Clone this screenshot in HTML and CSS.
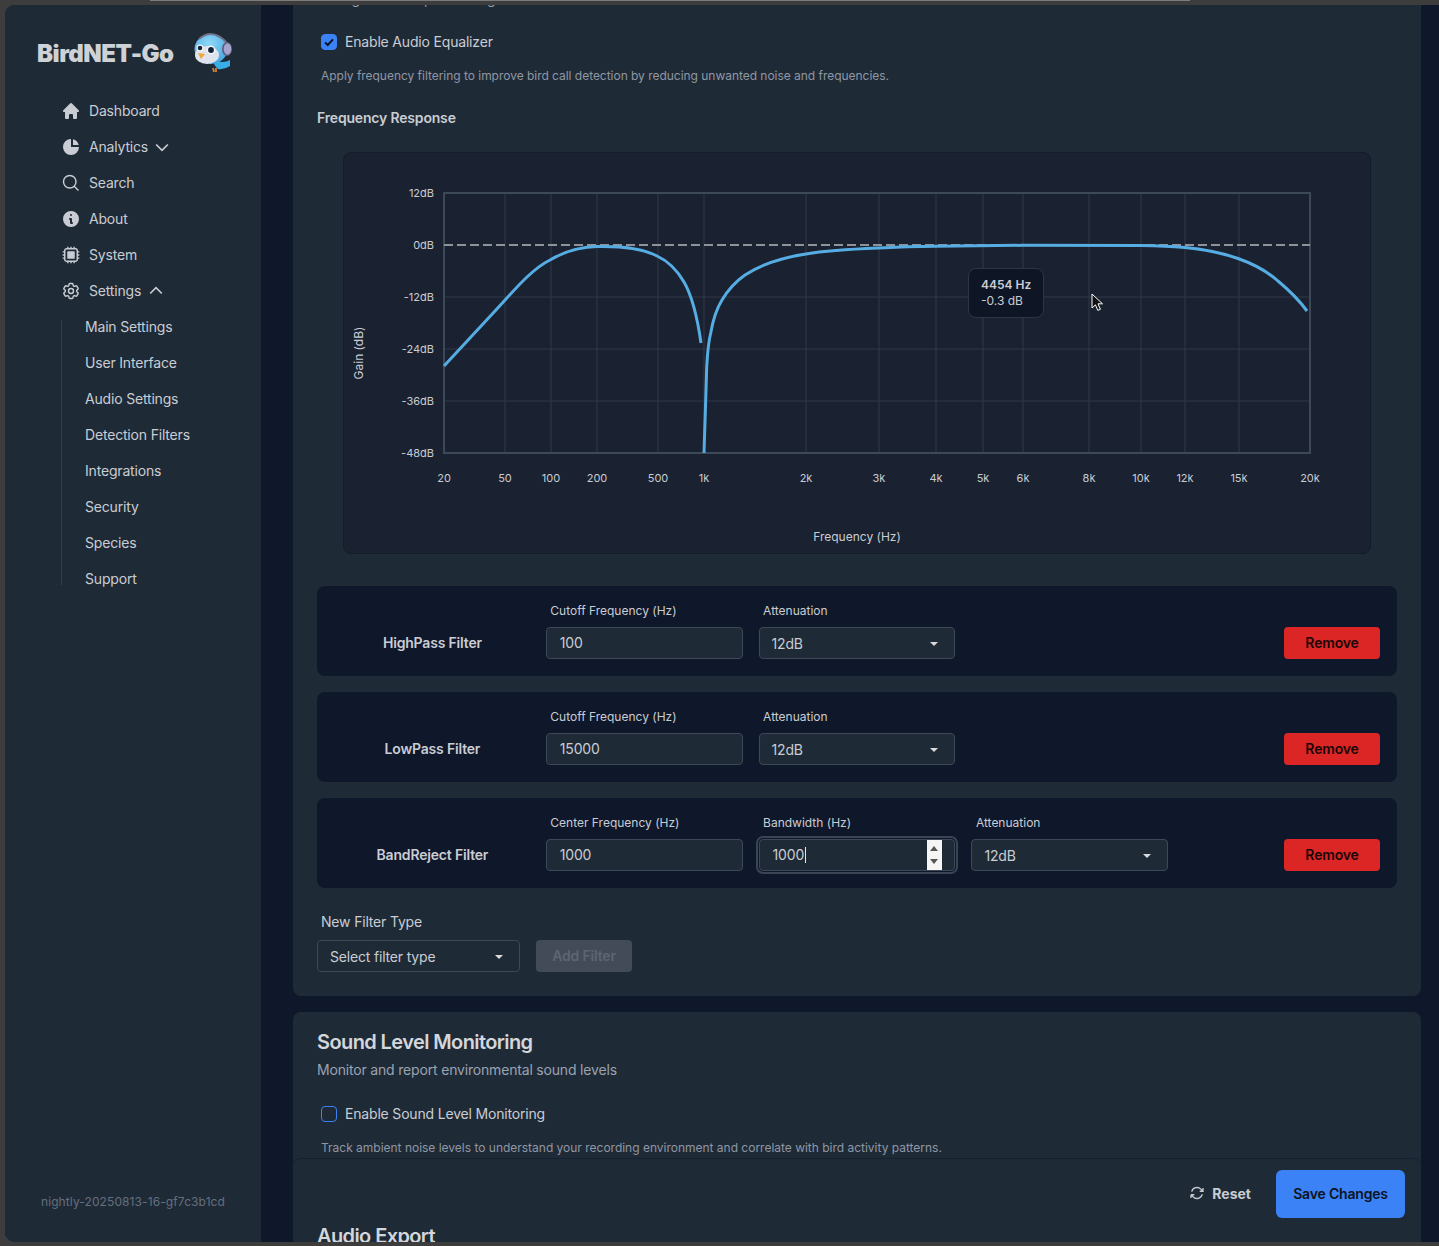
FILE: index.html
```html
<!DOCTYPE html>
<html lang="en">
<head>
    <meta charset="UTF-8">
    <meta name="viewport" content="width=device-width, initial-scale=1.0">
    <title>BirdNET-Go</title>
    <link rel="stylesheet" href="styles.css">
</head>
<body>
    <div class="window">
        <aside class="sidebar">
            <div class="brand">
                <span class="brandName">BirdNET-Go</span>
                <svg class="bird" viewBox="14 13 40 40" width="40" height="40">
                    <defs>
                        <radialGradient id="headFill" cx="0.45" cy="0.3" r="0.8">
                            <stop offset="0" stop-color="#8ed8f8"/>
                            <stop offset="1" stop-color="#3f9fdc"/>
                        </radialGradient>
                    </defs>
                    <path d="M34 40 Q44 44 51 40 L51 46 Q45 50 39 49 Q35 46 34 40 Z" fill="#39aee6"/>
                    <path d="M34 48 L35 52 M37 48 L37 52" stroke="#d9822b" stroke-width="1.8"/>
                    <ellipse cx="32" cy="29" rx="16.500" ry="15" fill="url(#headFill)"/>
                    <ellipse cx="28" cy="35" rx="12" ry="9" fill="#dfe3ee"/>
                    <circle cx="21" cy="28" r="3.6" fill="#f4f6fa"/>
                    <circle cx="32" cy="30" r="4.4" fill="#f4f6fa"/>
                    <circle cx="21" cy="28" r="2.300" fill="#14233a"/>
                    <circle cx="32" cy="30" r="2.900" fill="#14233a"/>
                    <path d="M19 33 L26 34 L22 39 Z" fill="#f2a732"/>
                    <path d="M20 19 Q34 7 49 24" fill="none" stroke="#6f7186" stroke-width="1.8"/>
                    <ellipse cx="48" cy="29" rx="5" ry="7" fill="#5d5b78"/>
                    <ellipse cx="48.500" cy="29" rx="3.800" ry="5.800" fill="#a5a3cf"/>
                </svg>
            </div>
            <nav class="nav">
                <a class="navItem">
                    <svg class="icon" viewBox="0 0 20 20" fill="currentColor"><path d="M9.293 2.293a1 1 0 011.414 0l7 7A1 1 0 0117 11h-1v6a1 1 0 01-1 1h-2a1 1 0 01-1-1v-3a1 1 0 00-1-1H9a1 1 0 00-1 1v3a1 1 0 01-1 1H5a1 1 0 01-1-1v-6H3a1 1 0 01-.707-1.707l7-7z"/></svg>
                    Dashboard
                </a>
                <a class="navItem">
                    <svg class="icon" viewBox="0 0 20 20" fill="currentColor"><path d="M2 10a8 8 0 018-8v8h8a8 8 0 11-16 0z"/><path d="M12 2.252A8.014 8.014 0 0117.748 8H12V2.252z"/></svg>
                    Analytics
                    <svg class="chev" viewBox="0 0 24 24" fill="none" stroke="currentColor" stroke-width="2"><path d="M5 9l7 7 7-7"/></svg>
                </a>
                <a class="navItem">
                    <svg class="icon" viewBox="0 0 24 24" fill="none" stroke="currentColor" stroke-width="1.700"><path d="M21 21l-5.197-5.197m0 0A7.5 7.5 0 105.196 5.196a7.5 7.5 0 0010.607 10.607z"/></svg>
                    Search
                </a>
                <a class="navItem">
                    <svg class="icon" viewBox="0 0 20 20" fill="currentColor"><path fill-rule="evenodd" d="M18 10a8 8 0 11-16 0 8 8 0 0116 0zm-7-4a1 1 0 11-2 0 1 1 0 012 0zM9 9a1 1 0 000 2v3a1 1 0 001 1h1a1 1 0 100-2v-3a1 1 0 00-1-1H9z"/></svg>
                    About
                </a>
                <a class="navItem">
                    <svg class="icon" viewBox="0 0 24 24" fill="none" stroke="currentColor" stroke-width="1.700"><path d="M8.25 2v2.500M2 8.25h2.500m15 0H22M2 12h2.500m15 0H22M2 15.750h2.500m15 0H22M8.25 19.500V22M12 2v2.500m0 15V22m3.750-20v2.500m0 15V22m-9-2.500h10.500a2.250 2.250 0 002.250-2.250V6.750a2.250 2.250 0 00-2.250-2.250H6.750A2.250 2.250 0 004.500 6.750v10.500a2.250 2.250 0 002.250 2.250z"/><rect x="7.500" y="7.500" width="9" height="9" rx="1" fill="currentColor" stroke="none"/></svg>
                    System
                </a>
                <a class="navItem">
                    <svg class="icon" viewBox="0 0 24 24" fill="none" stroke="currentColor" stroke-width="1.700"><path d="M9.594 3.94c.09-.542.56-.94 1.11-.94h2.593c.55 0 1.02.398 1.11.94l.213 1.281c.063.374.313.686.645.87.074.04.147.083.22.127.324.196.72.257 1.075.124l1.217-.456a1.125 1.125 0 011.37.49l1.296 2.247a1.125 1.125 0 01-.26 1.431l-1.003.827c-.293.24-.438.613-.431.992a6.759 6.759 0 010 .255c-.007.378.138.75.43.99l1.005.828c.424.35.534.954.26 1.43l-1.298 2.247a1.125 1.125 0 01-1.369.491l-1.217-.456c-.355-.133-.75-.072-1.076.124a6.57 6.57 0 01-.22.128c-.331.183-.581.495-.644.869l-.213 1.28c-.09.543-.56.941-1.11.941h-2.594c-.55 0-1.02-.398-1.11-.94l-.213-1.281c-.062-.374-.312-.686-.644-.87a6.52 6.52 0 01-.22-.127c-.325-.196-.72-.257-1.076-.124l-1.217.456a1.125 1.125 0 01-1.369-.49l-1.297-2.247a1.125 1.125 0 01.26-1.431l1.004-.827c.292-.24.437-.613.43-.992a6.932 6.932 0 010-.255c.007-.378-.138-.75-.43-.99l-1.004-.828a1.125 1.125 0 01-.26-1.43l1.297-2.247a1.125 1.125 0 011.37-.491l1.216.456c.356.133.751.072 1.076-.124.072-.044.146-.087.22-.128.332-.183.582-.495.644-.869l.214-1.281z"/><path d="M15 12a3 3 0 11-6 0 3 3 0 016 0z"/></svg>
                    Settings
                    <svg class="chev chevUp" viewBox="0 0 24 24" fill="none" stroke="currentColor" stroke-width="2"><path d="M5 15l7-7 7 7"/></svg>
                </a>
                <div class="subNav">
                    <a class="subItem">Main Settings</a>
                    <a class="subItem">User Interface</a>
                    <a class="subItem">Audio Settings</a>
                    <a class="subItem">Detection Filters</a>
                    <a class="subItem">Integrations</a>
                    <a class="subItem">Security</a>
                    <a class="subItem">Species</a>
                    <a class="subItem">Support</a>
                </div>
            </nav>
            <div class="version">nightly-20250813-16-gf7c3b1cd</div>
        </aside>

        <main class="main">
            <div class="content">
                <section class="card">
                    <p class="cutLine">Configure audio processing</p>
                    <label class="check">
                        <span class="box boxOn">
                            <svg viewBox="0 0 16 16" width="16" height="16" fill="none" stroke="#0b1424" stroke-width="2"><path d="M4 8.400l2.700 2.600L12 5.400"/></svg>
                        </span>
                        Enable Audio Equalizer
                    </label>
                    <p class="help">Apply frequency filtering to improve bird call detection by reducing unwanted noise and frequencies.</p>
                    <h3 class="subTitle">Frequency Response</h3>

                    <div class="chartBox">
                        <svg class="chart" viewBox="344 153 1026 400" width="1026" height="400">
                            <g class="gridLines">
                                <path d="M505 193V453M551 193V453M597 193V453M658 193V453M704 193V453M806 193V453M879 193V453M936 193V453M983 193V453M1023 193V453M1089 193V453M1141 193V453M1185 193V453M1239 193V453"/>
                                <path d="M444 297H1310M444 349H1310M444 401H1310"/>
                            </g>
                            <rect class="frame" x="444" y="193" width="866" height="260"/>
                            <path class="zeroLine" d="M444 245H1310"/>
                            <path class="curve" d="M444 366 L495 311 C512 293 530 270 550 260 C565 251 580 247 597 246.500 C620 246 642 248 657 256 C668 261 677 270 684 282 C691 294 697 315 701 343"/>
                            <path class="curve" d="M704 453 L705.700 400 L706.700 367 C707.500 352 708.500 342 710.700 333 C713 320 717 308 722 300 C728 290 735 282 745 275 C760 265 780 258 806 254 C830 250 855 249 879 248 C900 247 920 246.500 936 246.300 C970 245.700 1000 245.400 1023 245.300 C1070 245.200 1110 245.300 1141 245.600 C1160 246 1172 246.600 1185 247.600 C1205 249.500 1222 253 1238 258.500 C1255 264.500 1268 272 1278 281 C1290 291 1299 300 1307 311"/>
                            <g class="axisText yAxis">
                                <text x="434" y="197">12dB</text>
                                <text x="434" y="249">0dB</text>
                                <text x="434" y="301">-12dB</text>
                                <text x="434" y="353">-24dB</text>
                                <text x="434" y="405">-36dB</text>
                                <text x="434" y="457">-48dB</text>
                            </g>
                            <g class="axisText xAxis">
                                <text x="444" y="482">20</text>
                                <text x="505" y="482">50</text>
                                <text x="551" y="482">100</text>
                                <text x="597" y="482">200</text>
                                <text x="658" y="482">500</text>
                                <text x="704" y="482">1k</text>
                                <text x="806" y="482">2k</text>
                                <text x="879" y="482">3k</text>
                                <text x="936" y="482">4k</text>
                                <text x="983" y="482">5k</text>
                                <text x="1023" y="482">6k</text>
                                <text x="1089" y="482">8k</text>
                                <text x="1141" y="482">10k</text>
                                <text x="1185" y="482">12k</text>
                                <text x="1239" y="482">15k</text>
                                <text x="1310" y="482">20k</text>
                            </g>
                            <text class="axisTitle" x="857" y="541">Frequency (Hz)</text>
                            <text class="axisTitle" transform="translate(363 353) rotate(-90)">Gain (dB)</text>
                        </svg>
                        <div class="tooltip"><b>4454 Hz</b><br>-0.3 dB</div>
                        <svg class="pointer" viewBox="0 0 12 19" width="12" height="19"><path d="M1 1v14l3.400-3.200 2.400 5.600 2.600-1.100-2.400-5.500H11.500z" fill="#111" stroke="#fff" stroke-width="1"/></svg>
                    </div>

                    <div class="filterRow">
                        <div class="filterName">HighPass Filter</div>
                        <div class="field">
                            <label class="fieldLabel">Cutoff Frequency (Hz)</label>
                            <div class="input">100</div>
                        </div>
                        <div class="field">
                            <label class="fieldLabel">Attenuation</label>
                            <div class="input selectBox">12dB</div>
                        </div>
                        <div class="filler"></div>
                        <div class="removeCell"><button class="removeBtn">Remove</button></div>
                    </div>
                    <div class="filterRow">
                        <div class="filterName">LowPass Filter</div>
                        <div class="field">
                            <label class="fieldLabel">Cutoff Frequency (Hz)</label>
                            <div class="input">15000</div>
                        </div>
                        <div class="field">
                            <label class="fieldLabel">Attenuation</label>
                            <div class="input selectBox">12dB</div>
                        </div>
                        <div class="filler"></div>
                        <div class="removeCell"><button class="removeBtn">Remove</button></div>
                    </div>
                    <div class="filterRow">
                        <div class="filterName">BandReject Filter</div>
                        <div class="field">
                            <label class="fieldLabel">Center Frequency (Hz)</label>
                            <div class="input">1000</div>
                        </div>
                        <div class="field">
                            <label class="fieldLabel">Bandwidth (Hz)</label>
                            <div class="input inputFocus">1000<span class="caret"></span>
                                <span class="spinner"><i class="spinUp"></i><i class="spinDown"></i></span>
                            </div>
                        </div>
                        <div class="field">
                            <label class="fieldLabel">Attenuation</label>
                            <div class="input selectBox">12dB</div>
                        </div>
                        <div class="removeCell"><button class="removeBtn">Remove</button></div>
                    </div>

                    <div class="newLabel">New Filter Type</div>
                    <div class="newRow">
                        <div class="input selectBox newSelect">Select filter type</div>
                        <button class="addBtn">Add Filter</button>
                    </div>
                </section>

                <section class="card card2">
                    <h2 class="cardTitle">Sound Level Monitoring</h2>
                    <p class="cardSub">Monitor and report environmental sound levels</p>
                    <label class="check checkSound">
                        <span class="box"></span>
                        Enable Sound Level Monitoring
                    </label>
                    <p class="help helpSound">Track ambient noise levels to understand your recording environment and correlate with bird activity patterns.</p>
                </section>

                <section class="card card3">
                    <h2 class="cardTitle">Audio Export</h2>
                </section>
            </div>

            <div class="actionBar">
                <button class="resetBtn">
                    <svg viewBox="0 0 24 24" width="16" height="16" fill="none" stroke="currentColor" stroke-width="2"><path d="M16.023 9.348h4.992v-.001M2.985 19.644v-4.992m0 0h4.992m-4.993 0l3.181 3.183a8.25 8.25 0 0013.803-3.700M4.031 9.865a8.25 8.25 0 0113.803-3.700l3.181 3.182m0-4.991v4.990"/></svg>
                    Reset
                </button>
                <button class="saveBtn">Save Changes</button>
            </div>
        </main>
    </div>
</body>
</html>
```

FILE: styles.css
```css
html, body {
    margin: 0;
    height: 100%;
    overflow: hidden;
}
body {
    position: relative;
    background-color: #3d3d3d;
    font-family: Inter, "Liberation Sans", sans-serif;
    font-size: 14px;
    letter-spacing: -0.18px;
    color: #c9cdd3;
}
/* light edge of the window behind */
body::before {
    content: "";
    position: absolute;
    left: 150px;
    top: 0;
    width: 1040px;
    height: 1px;
    background-color: #7c7c7c;
}
button {
    font-family: inherit;
    letter-spacing: inherit;
    border: none;
    cursor: pointer;
}

.window {
    display: flex;
    height: 1237px;
    margin: 5px 0 0 5px;
    border-radius: 10px 0 0 10px;
    overflow: hidden;
    background-color: #0f172a;
}

/* sidebar */
.sidebar {
    position: relative;
    flex: 0 0 256px;
    background-color: #1f2a37;
}
.brand {
    display: flex;
    align-items: center;
    gap: 19px;
    height: 40px;
    padding: 28px 0 0 32px;
}
.brandName {
    font-size: 24px;
    font-weight: 900;
    letter-spacing: -0.5px;
    color: #ced1d6;
}
.bird {
    flex: none;
}
.nav {
    margin-top: 20px;
    padding-left: 56px;
}
.navItem {
    display: flex;
    align-items: center;
    height: 36px;
    line-height: 36px;
}
.icon {
    flex: none;
    width: 20px;
    height: 20px;
    margin-right: 8px;
}
.chev {
    width: 20px;
    height: 20px;
    margin-left: 4px;
}
.chevUp {
    margin-left: 5px;
}
.subNav {
    position: relative;
}
.subNav::before {
    content: "";
    position: absolute;
    left: 0;
    top: 11px;
    bottom: 12px;
    width: 1px;
    background-color: #333e4c;
}
.subItem {
    display: block;
    height: 36px;
    line-height: 36px;
    padding-left: 24px;
}
.version {
    position: absolute;
    left: 0;
    right: 0;
    bottom: 32px;
    text-align: center;
    font-size: 12px;
    letter-spacing: 0.1px;
    line-height: 16px;
    color: #666f7c;
}

/* main area */
.main {
    position: relative;
    flex: 1;
    overflow: hidden;
    padding: 0 18px 0 32px;
}
.content {
    margin-top: -40px;
}
.card {
    padding: 24px;
    margin-bottom: 16px;
    border-radius: 8px;
    background-color: #1f2a37;
}
.cutLine {
    margin: 0 0 25px 0;
    line-height: 20px;
    color: #9aa3af;
}
.check {
    display: flex;
    align-items: flex-start;
    gap: 8px;
    height: 16px;
    line-height: 15px;
    padding-left: 4px;
}
.box {
    box-sizing: border-box;
    width: 16px;
    height: 16px;
    border: 1px solid #3b82f6;
    border-radius: 4px;
}
.boxOn {
    background-color: #3b82f6;
}
.box svg {
    display: block;
    margin: -1px;
}
.help {
    margin: 18px 0 24px 0;
    padding-left: 4px;
    font-size: 12px;
    letter-spacing: -0.03px;
    line-height: 16px;
    color: #8f97a3;
}
.subTitle {
    margin: 0 0 24px 0;
    font-size: 14px;
    line-height: 20px;
    font-weight: 600;
}

/* chart */
.chartBox {
    position: relative;
    height: 400px;
    margin: 0 26px 32px 26px;
    border: 1px solid #141c2c;
    border-radius: 8px;
    background-color: #1a2130;
}
.chart {
    display: block;
}
.gridLines path {
    stroke: #303a49;
    stroke-width: 1;
    fill: none;
}
.frame {
    fill: none;
    stroke: #3d4858;
    stroke-width: 2;
}
.zeroLine {
    stroke: #8f9399;
    stroke-width: 2;
    stroke-dasharray: 9 4;
    fill: none;
}
.curve {
    fill: none;
    stroke: #56ade3;
    stroke-width: 3;
}
.axisText text {
    font-size: 11px;
    letter-spacing: 0;
    fill: #c9cdd3;
}
.yAxis text {
    text-anchor: end;
}
.xAxis text {
    text-anchor: middle;
}
.axisTitle {
    font-size: 12px;
    letter-spacing: 0;
    fill: #c9cdd3;
    text-anchor: middle;
}
.tooltip {
    position: absolute;
    left: 624px;
    top: 115px;
    box-sizing: border-box;
    width: 76px;
    height: 50px;
    padding: 8px 12px;
    border: 1px solid #2c3645;
    border-radius: 8px;
    background-color: #0e1626;
    font-size: 12px;
    letter-spacing: 0;
    line-height: 16px;
    white-space: nowrap;
}
.tooltip b {
    font-weight: 600;
}
.pointer {
    position: absolute;
    left: 747px;
    top: 140px;
}

/* filter rows */
.filterRow {
    display: grid;
    grid-template-columns: repeat(5, 1fr);
    column-gap: 16px;
    align-items: end;
    padding: 16px 16px 17px 16px;
    margin-bottom: 16px;
    border-radius: 8px;
    background-color: #0f172a;
}
.filterName {
    height: 32px;
    padding-left: 2px;
    line-height: 32px;
    text-align: center;
    font-weight: 600;
}
.fieldLabel {
    display: block;
    height: 25px;
    padding-left: 4.500px;
    font-size: 12px;
    letter-spacing: 0;
    line-height: 18px;
}
.input {
    position: relative;
    box-sizing: border-box;
    height: 32px;
    padding-left: 13px;
    line-height: 30px;
    border: 1px solid #3d4858;
    border-radius: 4px;
    background-color: #1f2a37;
}
.selectBox {
    padding-left: 12px;
    line-height: 32px;
}
.selectBox::after {
    content: "";
    position: absolute;
    right: 16px;
    top: 14px;
    border-left: 4px solid transparent;
    border-right: 4px solid transparent;
    border-top: 4px solid #d8dade;
}
.inputFocus {
    outline: 2px solid #3a4453;
    outline-offset: 1px;
}
.caret {
    display: inline-block;
    width: 1px;
    height: 16px;
    margin-left: 1px;
    vertical-align: -3px;
    background-color: #e5e7eb;
}
.spinner {
    position: absolute;
    right: 12px;
    top: 0;
    bottom: 0;
    width: 15px;
    background-color: #f5f5f5;
}
.spinUp, .spinDown {
    position: absolute;
    left: 3px;
    border-left: 4px solid transparent;
    border-right: 4px solid transparent;
}
.spinUp {
    top: 6px;
    border-bottom: 5px solid #555;
}
.spinDown {
    bottom: 6px;
    border-top: 5px solid #555;
}
.removeCell {
    text-align: right;
}
.removeBtn {
    width: 96px;
    height: 32px;
    margin-right: 1px;
    padding: 0 0 2px 0;
    border-radius: 4px;
    background-color: #dc2626;
    color: #1a0505;
    font-size: 14px;
    font-weight: 600;
}

/* add filter */
.newLabel {
    margin: 24px 0 8px 0;
    padding-left: 4px;
    line-height: 20px;
}
.newRow {
    display: flex;
    gap: 16px;
}
.newSelect {
    width: 203px;
}
.addBtn {
    width: 96px;
    height: 32px;
    padding: 0 0 2px 0;
    border-radius: 4px;
    background-color: #434b59;
    color: #5d6572;
    font-size: 14px;
    font-weight: 600;
}

/* lower sections */
.card2 {
    padding-top: 16px;
    padding-bottom: 34px;
}
.card3 {
    padding-top: 16px;
}
.cardTitle {
    margin: 0;
    font-size: 20px;
    letter-spacing: -0.6px;
    line-height: 28px;
    font-weight: 600;
    color: #d3d6db;
}
.cardSub {
    margin: 4px 0 26px 0;
    line-height: 20px;
    color: #9aa3af;
}
.helpSound {
    margin: 18px 0 0 0;
    letter-spacing: -0.01px;
}

.actionBar {
    position: absolute;
    left: 32px;
    right: 18px;
    top: 1153px;
    height: 70px;
    display: flex;
    justify-content: flex-end;
    align-items: flex-start;
    gap: 25px;
    padding: 11px 16px 0 0;
    box-sizing: border-box;
    border-top: 1px solid #152030;
    border-radius: 8px 8px 0 0;
    background-color: #1f2a37;
}
.resetBtn {
    display: flex;
    align-items: center;
    gap: 7px;
    height: 48px;
    padding: 0 0 2px 0;
    background: none;
    color: #c9cdd3;
    font-size: 14px;
    font-weight: 700;
    letter-spacing: 0;
}
.saveBtn {
    width: 129px;
    height: 48px;
    padding: 0 0 2px 0;
    border-radius: 6px;
    background-color: #3b82f6;
    color: #0b1424;
    font-size: 14px;
    font-weight: 600;
}
```
